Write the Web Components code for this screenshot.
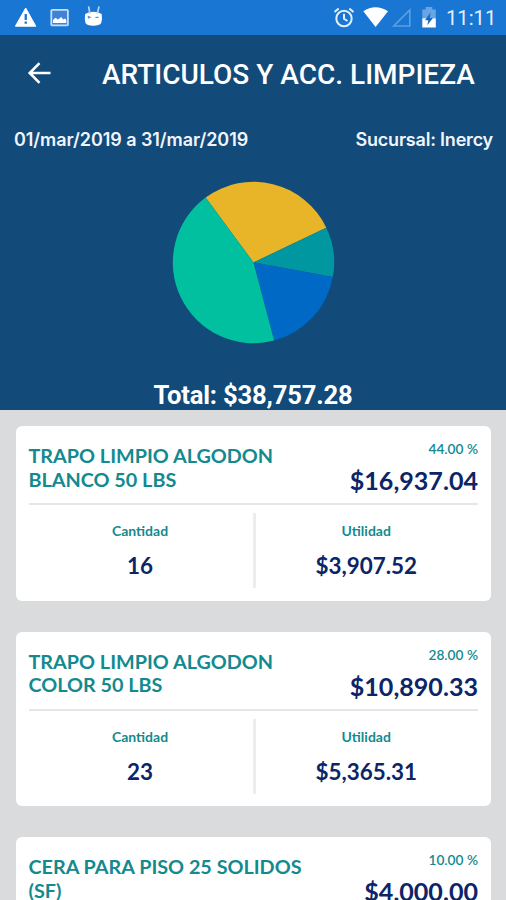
<!DOCTYPE html>
<html lang="es">
<head>
<meta charset="utf-8">
<meta name="viewport" content="width=device-width, initial-scale=1">
<title>Articulos y acc. limpieza</title>
<style>
    body {
        margin: 0;
        height: 900px;
        overflow: hidden;
        background: #dadbdd;
        font-family: Lato, "Liberation Sans", sans-serif;
    }
</style>
</head>
<body>
<sales-screen></sales-screen>

<script>
class StatusBar extends HTMLElement {
    constructor() {
        super();
        this.attachShadow({ mode: 'open' });
        this.shadowRoot.innerHTML = `
            <style>
                :host {
                    display: flex;
                    justify-content: space-between;
                    align-items: center;
                    box-sizing: border-box;
                    height: 34.5px;
                    background: #1976d2;
                    color: #e4effb;
                    font: 400 20.2px/34px Roboto, sans-serif;
                }
                svg { display: block; }
                .time { width: 48px; padding-top: 2px; white-space: nowrap; }
                .right { display: flex; align-items: center; padding-right: 12px; }
            </style>
            <svg width="110" height="34" viewBox="0 0 110 34">
                <path d="M25.7 8L35.800 26.200H15.400Z" fill="#fff" stroke="#fff" stroke-linejoin="round"/>
                <path d="M24.600 14h2.300v6h-2.300zM24.600 21.500h2.300v2.300h-2.300z" fill="#1976d2"/>
                <rect x="51.300" y="9.800" width="16.600" height="15.600" rx="1" fill="#3d84d6" stroke="#c9dcf5" stroke-width="1.800"/>
                <path d="M53 23v-3l2.500-2.200 2.500 1.800 3.200-2.600 2 2.600 1.800-1.200L66.300 20v3z" fill="#fff"/>
                <path d="M85.200 14Q89 11.800 93.300 11.800Q98 11.800 101.700 14Q102.500 19 101.200 23Q99.500 25.800 93.300 25.800Q87 25.800 85.500 23Q84.300 19 85.200 14Z" fill="#fff"/>
                <path d="M89.800 13L88.700 7M97.500 13L98.900 7" stroke="#b9d3f2" stroke-width="1.700" stroke-linecap="round"/>
                <path d="M87.800 16.300l2.200.9-2.200.9M95.500 17.300h3" fill="none" stroke="#5d8fc9" stroke-width="1.200"/>
            </svg>
            <div class="right">
                <svg width="116" height="34" viewBox="330 0 116 34">
                    <g fill="none" stroke="#e4effb" stroke-width="2">
                        <circle cx="344" cy="18.500" r="7.700"/>
                        <path d="M344 13.800v5l3.500 2.200M334.500 12l4.200-3.600M353.500 12l-4.200-3.600"/>
                    </g>
                    <path d="M363.300 11.200Q375.500 3.200 388 11.200L375.600 27Z" fill="#fff"/>
                    <path d="M393.800 26H409.800V10Z" fill="none" stroke="#5c9fe3" stroke-width="1.600"/>
                    <path d="M422.300 9.500h3.400V7h6.600v2.500h3.500v9h-13.500z" fill="#6aa5e3"/>
                    <path d="M422.300 18.300h13.500v9.200h-13.500z" fill="#fff"/>
                    <path d="M430.600 12.500L425 20.300h3.300l-1 5 5.600-7.300h-3.200z" fill="#1668c0"/>
                </svg>
                <span class="time"><slot></slot></span>
            </div>
        `;
    }
}

customElements.define('status-bar', StatusBar);

class ScreenTitle extends HTMLElement {
    constructor() {
        super();
        this.attachShadow({ mode: 'open' });
        this.shadowRoot.innerHTML = `
            <style>
                :host {
                    display: flex;
                    align-items: center;
                    height: 80px;
                    color: #fff;
                    font: 500 28px/32px Roboto, sans-serif;
                    white-space: nowrap;
                }
                svg { display: block; margin: 0 50px 3px 27px; }
            </style>
            <svg width="25" height="24" viewBox="0 0 25 24">
                <path d="M23.500 12H2.500M12.500 2.200L2.700 12L12.500 21.800" fill="none" stroke="#fff" stroke-width="2.600"/>
            </svg>
            <slot></slot>
        `;
    }
}

customElements.define('screen-title', ScreenTitle);

class PieChart extends HTMLElement {
    constructor() {
        super();
        this.attachShadow({ mode: 'open' });
    }

    connectedCallback() {
        const values = this.getAttribute('values').split(',').map(Number);
        const colors = this.getAttribute('colors').split(',');
        const r = 80.7;
        let angle = Number(this.getAttribute('start'));

        // Angles run clockwise from the top
        const point = deg => {
            const rad = deg * Math.PI / 180;
            return `${(r * Math.sin(rad)).toFixed(2)} ${(-r * Math.cos(rad)).toFixed(2)}`;
        };

        const slices = values.map((value, i) => {
            const from = angle;
            angle += value * 3.6;
            return `<path d="M0 0L${point(from)}A${r} ${r} 0 0 1 ${point(angle)}Z" fill="${colors[i]}"/>`;
        });

        this.shadowRoot.innerHTML = `
            <style>
                :host { display: flex; justify-content: center; }
                svg { display: block; }
            </style>
            <svg width="163" height="163" viewBox="-81.5 -81.5 163 163">${slices.join('')}</svg>
        `;
    }
}

customElements.define('pie-chart', PieChart);

class ProductCard extends HTMLElement {
    constructor() {
        super();
        this.attachShadow({ mode: 'open' });
        this.shadowRoot.innerHTML = `
            <style>
                :host {
                    display: block;
                    box-sizing: border-box;
                    height: 174.5px;
                    padding: 0 13px;
                    border-radius: 6px;
                    background: #fff;
                    color: #0c2568;
                    font-weight: 700;
                }
                .top {
                    display: flex;
                    justify-content: space-between;
                    box-sizing: border-box;
                    height: 79px;
                    border-bottom: 2px solid #e6e6e8;
                }
                .name {
                    width: 290px;
                    padding-top: 18px;
                    color: #138a90;
                    font-size: 19.8px;
                    line-height: 23.5px;
                }
                .amounts { text-align: right; white-space: nowrap; }
                .percent {
                    padding-top: 14px;
                    color: #138a90;
                    font-size: 13.7px;
                    font-weight: 600;
                    line-height: 18px;
                }
                .total { font-size: 25.1px; line-height: 44px; }
                .bottom { display: flex; padding-top: 8px; height: 75px; }
                .cell { box-sizing: border-box; text-align: center; }
                .cell:first-child { width: 224px; padding-right: 1px; }
                .cell + .cell { flex: 1; padding-right: 1px; border-left: 3px solid #ededee; }
                .label {
                    padding-top: 9px;
                    color: #138a90;
                    font-size: 14px;
                    line-height: 18px;
                }
                .value { font-size: 22.4px; line-height: 30px; padding-top: 11px; }
            </style>
            <div class="top">
                <div class="name"><slot name="name"></slot></div>
                <div class="amounts">
                    <div class="percent"><slot name="percent"></slot></div>
                    <div class="total"><slot name="total"></slot></div>
                </div>
            </div>
            <div class="bottom">
                <div class="cell">
                    <div class="label">Cantidad</div>
                    <div class="value"><slot name="quantity"></slot></div>
                </div>
                <div class="cell">
                    <div class="label">Utilidad</div>
                    <div class="value"><slot name="profit"></slot></div>
                </div>
            </div>
        `;
    }
}

customElements.define('product-card', ProductCard);

class SalesScreen extends HTMLElement {
    constructor() {
        super();
        this.attachShadow({ mode: 'open' });
    }

    connectedCallback() {
        const products = [
            { name: 'TRAPO LIMPIO ALGODON<br>BLANCO 50 LBS', percent: '44.00 %', total: '$16,937.04', quantity: '16', profit: '$3,907.52' },
            { name: 'TRAPO LIMPIO ALGODON<br>COLOR 50 LBS', percent: '28.00 %', total: '$10,890.33', quantity: '23', profit: '$5,365.31' },
            { name: 'CERA PARA PISO 25 SOLIDOS<br>(SF)', percent: '10.00 %', total: '$4,000.00', quantity: '', profit: '' }
        ];

        this.shadowRoot.innerHTML = `
            <style>
                :host { display: block; height: 900px; overflow: hidden; }
                header { height: 375.5px; background: #124a7a; color: #fff; }
                .filters {
                    display: flex;
                    justify-content: space-between;
                    padding: 13.5px 13px 0 14px;
                    color: #f1f5fb;
                    font: 600 18px/24px Inter, sans-serif;
                    white-space: nowrap;
                }
                .period { letter-spacing: -0.07px; }
                .branch { letter-spacing: -0.2px; }
                pie-chart { margin-top: 29px; }
                .sum {
                    margin-top: 35px;
                    text-align: center;
                    font: 700 25.6px/32px Roboto, sans-serif;
                    letter-spacing: -0.17px;
                }
                main {
                    display: flex;
                    flex-direction: column;
                    gap: 31px;
                    padding: 16px 15px 0 15.5px;
                }
            </style>
            <status-bar>11:11</status-bar>
            <header>
                <screen-title>ARTICULOS Y ACC. LIMPIEZA</screen-title>
                <div class="filters">
                    <span class="period">01/mar/2019 a 31/mar/2019</span>
                    <span class="branch">Sucursal: Inercy</span>
                </div>
                <pie-chart start="-36.4" values="28,10,18,44" colors="#e8b428,#0097a0,#0068c5,#00c09f"></pie-chart>
                <div class="sum">Total: $38,757.28</div>
            </header>
            <main>
                ${products.map(p => `
                    <product-card>
                        <span slot="name">${p.name}</span>
                        <span slot="percent">${p.percent}</span>
                        <span slot="total">${p.total}</span>
                        <span slot="quantity">${p.quantity}</span>
                        <span slot="profit">${p.profit}</span>
                    </product-card>
                `).join('')}
            </main>
        `;
    }
}

customElements.define('sales-screen', SalesScreen);
</script>
</body>
</html>
